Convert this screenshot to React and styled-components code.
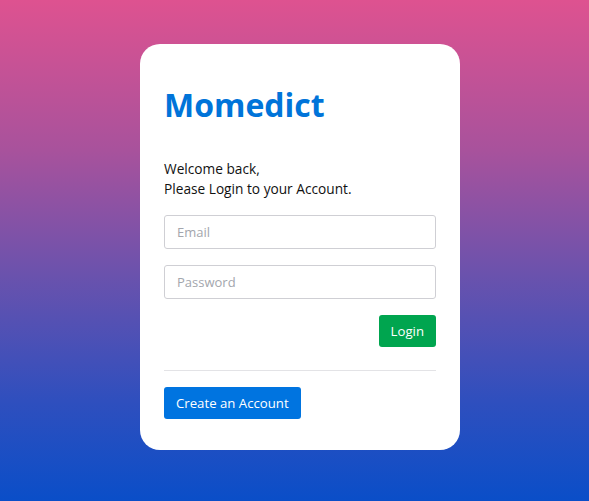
import React from 'react';
import styled, { createGlobalStyle } from 'styled-components';

const GlobalStyle = createGlobalStyle`
  html, body {
    margin: 0;
    padding: 0;
  }
  body {
    font-family: "Open Sans", "Liberation Sans", sans-serif;
    color: #212121;
  }
  * {
    box-sizing: border-box;
  }
`

const Page = styled.div`
  min-height: 501px;
  padding: 44px 0 0 140px;
  background: linear-gradient(to bottom, #de5290 0%, #a8529c 30%, #6a52ad 55%, #2f4fbe 80%, #0a4ec8 100%);
`

const Card = styled.div`
  display: flex;
  flex-direction: column;
  width: 320px;
  height: 406px;
  padding: 24px;
  background-color: #fff;
  border-radius: 20px;
`

const Title = styled.h1`
  margin: 15px 0 32px;
  font-size: 32px;
  line-height: 44px;
  font-weight: 700;
  color: #0074d9;
`

const Greeting = styled.p`
  margin: 0 0 16px;
  font-size: 13.7px;
  line-height: 20px;
  color: #111;
`

const Field = styled.input`
  display: block;
  width: 100%;
  height: 34px;
  margin-bottom: 16px;
  padding: 0 12px;
  font-family: inherit;
  font-size: 13px;
  color: #333;
  border: 1px solid #cfcfd4;
  border-radius: 3px;
  outline: none;

  &::placeholder {
    color: #a3a6ad;
  }
`

const Actions = styled.div`
  display: flex;
  justify-content: ${props => props.align || 'flex-start'};
`

const Button = styled.button`
  height: 32px;
  padding: 0 12px;
  font-family: inherit;
  font-size: 13.2px;
  color: #fff;
  background-color: ${props => props.color};
  border: none;
  border-radius: 3px;
  cursor: pointer;
`

const Divider = styled.hr`
  margin: 23px 0 16px;
  border: none;
  border-top: 1px solid #e3e3e6;
`

const App = () => {
  return (
    <Page>
      <GlobalStyle />
      <Card>
        <Title>Momedict</Title>
        <Greeting>
          Welcome back,<br />
          Please Login to your Account.
        </Greeting>
        <Field type="email" placeholder="Email" />
        <Field type="password" placeholder="Password" />
        <Actions align="flex-end">
          <Button color="#00a54f">Login</Button>
        </Actions>
        <Divider />
        <Actions>
          <Button color="#0074e0">Create an Account</Button>
        </Actions>
      </Card>
    </Page>
  );
}

export default App;
